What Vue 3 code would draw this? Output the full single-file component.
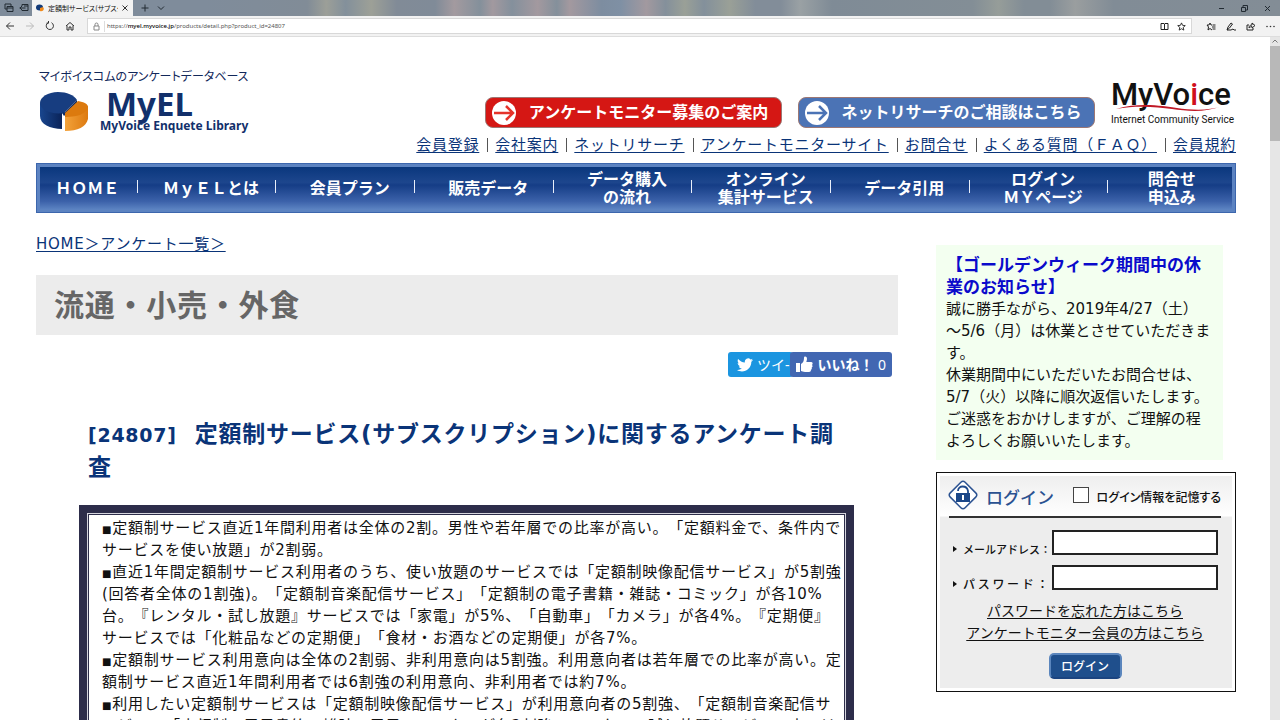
<script setup>
const utilityLinks = ['会員登録', '会社案内', 'ネットリサーチ', 'アンケートモニターサイト', 'お問合せ', 'よくある質問（ＦＡＱ）', '会員規約']

const navItems = [
  ['ＨＯＭＥ'],
  ['ＭｙＥＬとは'],
  ['会員プラン'],
  ['販売データ'],
  ['データ購入', 'の流れ'],
  ['オンライン', '集計サービス'],
  ['データ引用'],
  ['ログイン', 'ＭＹページ'],
  ['問合せ', '申込み'],
]

const summary = [
  ['定額制サービス直近1年間利用者は全体の2割。男性や若年層での比率が高い。「定額料金で、条件内で', 'サービスを使い放題」が2割弱。'],
  ['直近1年間定額制サービス利用者のうち、使い放題のサービスでは「定額制映像配信サービス」が5割強', '(回答者全体の1割強)。「定額制音楽配信サービス」「定額制の電子書籍・雑誌・コミック」が各10%', '台。『レンタル・試し放題』サービスでは「家電」が5%、「自動車」「カメラ」が各4%。『定期便』', 'サービスでは「化粧品などの定期便」「食材・お酒などの定期便」が各7%。'],
  ['定額制サービス利用意向は全体の2割弱、非利用意向は5割強。利用意向者は若年層での比率が高い。定', '額制サービス直近1年間利用者では6割強の利用意向、非利用者では約7%。'],
  ['利用したい定額制サービスは「定額制映像配信サービス」が利用意向者の5割強、「定額制音楽配信サ', 'ービス」「定額制の電子書籍・雑誌・電子コミック」が各2割強。レンタル・試し放題サービスの中では'],
]

const notice = ['誠に勝手ながら、2019年4/27（土）', '～5/6（月）は休業とさせていただきま', 'す。', '休業期間中にいただいたお問合せは、', '5/7（火）以降に順次返信いたします。', 'ご迷惑をおかけしますが、ご理解の程', 'よろしくお願いいたします。']
</script>

<template>
  <div class="window">
    <div class="titlebar">
      <div class="tab-tools">
        <svg width="10" height="10" viewBox="0 0 10 10" fill="none" stroke="#222b33"><path d="M1 1h6v2M1 1v5h2M3 3.5h6v5H3zM3 5h6" /></svg>
        <svg width="10" height="10" viewBox="0 0 10 10" fill="none" stroke="#222b33"><path d="M3 3V1.500h6v6H3V7M0.500 5h6M3 3L1 5l2 2M5 3h4" /></svg>
      </div>
      <div class="tab">
        <svg width="8" height="8" viewBox="0 0 8 8"><ellipse cx="3.500" cy="3.500" rx="3.500" ry="3" fill="#123a78" /><path d="M4 4l3-1c2 2 0 5-3 4z" fill="#f08a1c" /></svg>
        <span class="tab-title">定額制サービス(サブスクリ</span>
        <button class="plain" aria-label="タブを閉じる"><svg width="6" height="6" viewBox="0 0 6 6" stroke="#333" fill="none"><path d="M.5.5l5 5m0-5l-5 5" /></svg></button>
      </div>
      <button class="plain" aria-label="新しいタブ"><svg width="8" height="8" viewBox="0 0 8 8" stroke="#222b33" fill="none"><path d="M4 .5v7M.5 4h7" /></svg></button>
      <button class="plain" aria-label="タブ一覧"><svg width="8" height="8" viewBox="0 0 8 8" stroke="#222b33" fill="none"><path d="M1 2.500l3 3 3-3" /></svg></button>
      <div class="controls">
        <button class="plain" aria-label="最小化"><svg width="7" height="7" viewBox="0 0 7 7" stroke="#222b33"><path d="M1 3.500h5" /></svg></button>
        <button class="plain" aria-label="元に戻す"><svg width="7" height="7" viewBox="0 0 7 7" stroke="#222b33" fill="none"><path d="M.5 2.500h4v4h-4zM2 2V.5h4.500V5H5" /></svg></button>
        <button class="plain" aria-label="閉じる"><svg width="7" height="7" viewBox="0 0 7 7" stroke="#222b33"><path d="M1 1l5 5m0-5L1 6" /></svg></button>
      </div>
    </div>

    <div class="toolbar">
      <div class="tools left">
        <button class="plain" aria-label="戻る"><svg width="10" height="10" viewBox="0 0 10 10" stroke="#333" fill="none"><path d="M9 5H1.500M5 1.500L1.500 5 5 8.500" /></svg></button>
        <button class="plain" aria-label="進む"><svg width="10" height="10" viewBox="0 0 10 10" stroke="#bbb" fill="none"><path d="M1 5h7.500M5 1.500L8.500 5 5 8.500" /></svg></button>
        <button class="plain" aria-label="更新"><svg width="10" height="10" viewBox="0 0 10 10" stroke="#333" fill="none"><path d="M3 1.800A3.600 3.600 0 1 0 6.500 1.700M3.500 0v2.200H1.500" /></svg></button>
        <button class="plain" aria-label="ホーム"><svg width="10" height="10" viewBox="0 0 10 10" stroke="#333" fill="none"><path d="M1 5l4-3.500L9 5M2 4.500V9h2V6h2v3h2V4.500" /></svg></button>
      </div>
      <div class="address">
        <svg width="7" height="9" viewBox="0 0 7 9" stroke="#888" fill="none"><path d="M1 4h5v4H1zM2 4V2.500a1.500 1.500 0 0 1 3 0V4" /></svg>
        <span class="url">https://<b>myel.myvoice.jp</b>/products/detail.php?product_id=24807</span>
        <button class="plain" aria-label="読み取りビュー"><svg width="9" height="9" viewBox="0 0 9 9" stroke="#222" fill="none"><path d="M1 1.500h3l.5.5.5-.5h3v6H5l-.5.5-.5-.5H1zM4.500 2v6" /></svg></button>
        <button class="plain" aria-label="お気に入りに追加"><svg width="9" height="9" viewBox="0 0 10 10" stroke="#222" fill="none"><path d="M5 1l1.200 2.700 3 .3-2.300 2 .7 3L5 7.500 2.400 9l.7-3L.8 4l3-.3z" /></svg></button>
      </div>
      <div class="tools right">
        <button class="plain" aria-label="ハブ"><svg width="10" height="9" viewBox="0 0 10 9" stroke="#222" fill="none"><path d="M6.500 3H5L4 1 3 3H1l1.500 2L2 8l2-1.500L6 8M6 5h3.500M6.500 7h3M7 3h2.500" /></svg></button>
        <button class="plain" aria-label="ノート"><svg width="10" height="9" viewBox="0 0 10 9" stroke="#222" fill="none"><path d="M1 8l1-3 3-4 1.500 1-3 4L1 8h4l2-1 1 1h2" /></svg></button>
        <button class="plain" aria-label="共有"><svg width="10" height="9" viewBox="0 0 10 9" stroke="#222" fill="none"><path d="M3 3H1v5h6V6M3 6c0-2 1-3 3-3V1l3 2.500L6 6V4.500C5 4.500 4 5 3 6z" /></svg></button>
        <button class="plain" aria-label="設定"><svg width="9" height="3" viewBox="0 0 9 3" fill="#333"><circle cx="1" cy="1.500" r=".8" /><circle cx="4.500" cy="1.500" r=".8" /><circle cx="8" cy="1.500" r=".8" /></svg></button>
      </div>
    </div>

    <div class="viewport">
      <div class="page">
        <header class="head">
          <div class="brand">
            <p class="tagline">マイボイスコムのアンケートデータベース</p>
            <div class="brand-row">
              <svg class="pie" width="50" height="42" viewBox="0 0 50 42">
                <defs>
                  <linearGradient id="pieBlue" x1="0" x2="1" y2="0"><stop offset="0" stop-color="#19468e" /><stop offset="1" stop-color="#0a2358" /></linearGradient>
                  <linearGradient id="pieOrange" x1="0" x2="1" y2="0"><stop offset="0" stop-color="#f3a23a" /><stop offset="1" stop-color="#dd7a10" /></linearGradient>
                </defs>
                <path d="M0 12v13c0 8 10 13 22 13V22z" fill="url(#pieBlue)" />
                <path d="M24 22L37 9C34 4 27 1 18 1 8 1 0 6 0 12s10 12 24 10z" fill="#173d80" />
                <path d="M22 22l3-1 12-12v3L24 25z" fill="#0c2a63" />
                <path d="M25 25l23-10v13c-2 8-10 12-23 12z" fill="url(#pieOrange)" />
                <path d="M25 25V22L38 10c6 1 10 3 10 6-1 6-9 10-23 10z" fill="#dc7a0e" />
              </svg>
              <div class="brand-text">
                <span class="brand-name">MyEL</span>
                <span class="brand-sub">MyVoice Enquete Library</span>
              </div>
            </div>
          </div>
          <div class="head-right">
            <div class="banner-row">
              <a href="#" class="banner red">
                <svg width="24" height="24" viewBox="0 0 24 24"><circle cx="12" cy="12" r="12" fill="#fff" /><path d="M2 12h18M14 5l7 7-7 7" fill="none" stroke="#e5332a" stroke-width="2.500" /></svg>
                <span>アンケートモニター募集のご案内</span>
              </a>
              <a href="#" class="banner blue">
                <svg width="24" height="24" viewBox="0 0 24 24"><circle cx="12" cy="12" r="12" fill="#fff" /><path d="M2 12h18M14 5l7 7-7 7" fill="none" stroke="#4b73b5" stroke-width="2.500" /></svg>
                <span>ネットリサーチのご相談はこちら</span>
              </a>
              <div class="myvoice">
                <span class="mv-name">MyVo<i>i</i>ce</span>
                <svg class="swoosh" width="108" height="8" viewBox="0 0 108 8"><path d="M1 5C25-2 48 2 62 4s32 3 45-2C90 9 72 7 57 5S22 1 1 5z" fill="#c01825" /></svg>
                <span class="mv-sub">Internet Community Service</span>
              </div>
            </div>
            <nav class="utility">
              <a v-for="l in utilityLinks" :key="l" href="#">{{ l }}</a>
            </nav>
          </div>
        </header>

        <nav class="mainnav">
          <a v-for="item in navItems" :key="item[0]" href="#"><span v-for="t in item" :key="t">{{ t }}</span></a>
        </nav>

        <div class="columns">
          <main>
            <div class="crumbs"><a href="#">HOME＞アンケート一覧＞</a></div>
            <h1>流通・小売・外食</h1>
            <div class="share">
              <button class="tweet">
                <svg width="16" height="14" viewBox="0 0 24 20"><path fill="#fff" d="M24 2.400c-.9.400-1.800.7-2.800.8 1-.6 1.800-1.600 2.200-2.700-1 .6-2 1-3.100 1.200A4.900 4.900 0 0 0 11.900 6.200C7.800 6 4.200 4 1.700 1c-1.300 2.200-.7 5.100 1.500 6.600-.8 0-1.600-.2-2.200-.6 0 2.300 1.600 4.400 3.900 4.900-.7.200-1.500.2-2.200.1.600 2 2.400 3.400 4.600 3.400A9.900 9.900 0 0 1 0 17.500C9.100 23.300 21.500 17 21.500 5c1-.7 1.800-1.600 2.500-2.600z" /></svg>
                <span>ツイ-</span>
              </button>
              <button class="like">
                <svg width="17" height="17" viewBox="0 0 17 17" fill="#fff"><path d="M0 7h4v9H0zM5 8c2-1 3-3 3-6 0-2 3-2 3 1 0 1-.5 2-.7 3H15c2 0 2 2 1 3 1 1 .6 2-.3 2.500.4 1 0 2-.8 2.200.2 1-.2 2.300-2 2.300H9c-2 0-3-1-4-1z" /></svg>
                <b>いいね！</b><span>0</span>
              </button>
            </div>
            <h2><small>[24807]</small>定額制サービス(サブスクリプション)に関するアンケート調<br>査</h2>
            <div class="summary">
              <div class="summary-inner">
                <p v-for="p in summary" :key="p[0]"><span class="sq">■</span><template v-for="(l, i) in p" :key="i"><br v-if="i">{{ l }}</template></p>
              </div>
            </div>
          </main>

          <aside>
            <section class="notice">
              <h3><a href="#">【ゴールデンウィーク期間中の休<br>業のお知らせ】</a></h3>
              <p><template v-for="(l, i) in notice" :key="i"><br v-if="i">{{ l }}</template></p>
            </section>
            <form class="login" @submit.prevent>
              <div class="login-head">
                <svg width="32" height="32" viewBox="0 0 32 32"><rect x="5.500" y="5.500" width="21" height="21" rx="3" transform="rotate(45 16 16)" fill="#fff" stroke="#2b5291" stroke-width="1.500" /><path d="M11 12c0-6 9-6 10 0v3" fill="none" stroke="#1f4a8c" stroke-width="1.800" /><rect x="9" y="14" width="14" height="9" fill="#1b4788" /><path d="M16 16v5" stroke="#fff" stroke-width="2" /></svg>
                <span class="login-title">ログイン</span>
                <input id="remember" type="checkbox">
                <label for="remember">ログイン情報を記憶する</label>
              </div>
              <div class="field">
                <i class="tri"></i><label for="mail">メールアドレス：</label><input id="mail" type="text">
              </div>
              <div class="field">
                <i class="tri"></i><label for="pass">パ ス ワ ー ド ：</label><input id="pass" type="password">
              </div>
              <p class="help"><a href="#">パスワードを忘れた方はこちら</a><a href="#">アンケートモニター会員の方はこちら</a></p>
              <button class="submit">ログイン</button>
            </form>
          </aside>
        </div>
      </div>
      <div class="scrollbar"><svg width="10" height="9" viewBox="0 0 10 9" fill="none" stroke="#777"><path d="M2.500 5.500L5 3l2.500 2.500" /></svg><div class="thumb"></div></div>
    </div>
  </div>
</template>

<style>
body { margin: 0; overflow: hidden; }
</style>

<style scoped>
* { box-sizing: border-box; }
p, h1, h2, h3 { margin: 0; }
svg { display: block; flex: none; }
button, input { font: inherit; letter-spacing: inherit; }
.plain { border: 0; background: none; padding: 0; display: flex; align-items: center; }
.window {
  height: 100vh; display: flex; flex-direction: column; background: #fff; color: #111;
  font-family: "DejaVu Sans", "Noto Sans CJK JP", sans-serif; font-size: 15px; line-height: 22px;
  text-spacing-trim: space-all;
}
.titlebar {
  height: 16px; flex: none; display: flex; align-items: center; gap: 8px; padding-right: 9px;
  background: linear-gradient(90deg, #7f8c9b 0 16%, #818c97 24%, #9c9f98 25.500%, #83909b 27%, #9da097 29%, #818b97 31%, #808b98 34%, #a39a9f 35.500%, #84909b 37.500%, #a2999f 38.500%, #84909c 40%, #a3999f 42%, #84909b 43.500%, #a3999f 44.500%, #7d8da0 47%, #7f90a4 48.500%, #a2999f 50.500%, #84909b 52%, #9aa097 53.500%, #83909b 55%, #9aa097 57%, #828d99 59%, #828d99 61%, #9aa1a4 62.500%, #7f8b96 65%, #838e96 76%, #969d99 78%, #828d96 80%, #828d96 82%, #9a9e9f 84%, #818c96 87%, #838d96 100%);
}
.tab-tools { width: 32px; padding: 0 3px 0 4px; margin-right: -8px; display: flex; justify-content: space-between; }
.tab { width: 101px; height: 16px; background: #f3f3f3; display: flex; align-items: center; gap: 4px; padding: 0 5px 0 4px; }
.tab-title { flex: 1; overflow: hidden; white-space: nowrap; font-size: 7px; line-height: 14px; font-feature-settings: "palt"; font-family: "Noto Sans CJK JP", sans-serif; }
.controls { margin-left: auto; display: flex; gap: 16px; }
.toolbar { height: 21px; flex: none; display: flex; align-items: center; background: #f2f2f2; border-bottom: 1px solid #ddd; }
.tools { display: flex; align-items: center; }
.left { gap: 10px; padding: 0 12px 0 5px; }
.right { gap: 10px; padding: 0 5px 0 14px; }
.address { flex: 1; height: 16px; background: #fff; border: 1px solid #d8d8d8; display: flex; align-items: center; gap: 8px; padding: 0 5px; }
.url { flex: 1; font: 6px/11px "Noto Sans", sans-serif; color: #555; border-left: 1px solid #ddd; padding-left: 2px; margin-left: -4px; }
.url b { font-weight: 500; color: #000; }
.viewport { flex: 1; min-height: 0; display: flex; overflow: hidden; }
.page { flex: 1; min-width: 0; padding: 28px 34px 0 36px; letter-spacing: 0.05em; }
.scrollbar { width: 10px; flex: none; background: #e6e6e6; }
.thumb { height: 95px; background: #b8b8b8; }
a { color: #0a3478; text-underline-offset: 2px; }

.head { display: flex; justify-content: space-between; }
.tagline { font: 12px/22px "Noto Sans CJK JP", sans-serif; font-feature-settings: "palt"; letter-spacing: 0; color: #12285a; padding-left: 3px; }
.brand-row { display: flex; gap: 10px; padding: 4px 0 0 4px; letter-spacing: 0; }
.brand-text { display: flex; flex-direction: column; color: #12306b; font-family: "Noto Sans", sans-serif; font-weight: 700; }
.brand-name { font-size: 33px; line-height: 26px; padding-left: 6px; }
.brand-sub { font-size: 12px; line-height: 18px; font-weight: 700; }
.head-right { display: flex; flex-direction: column; align-items: flex-end; }
.banner-row { display: flex; align-items: flex-end; gap: 16px; padding-top: 12px; }
.banner { width: 297px; height: 31px; border-radius: 8px; border: 1px solid #9c7774; display: flex; align-items: center; padding: 0 6px; text-decoration: none; color: #fff; font-weight: 700; font-size: 16px; letter-spacing: 0; margin-bottom: -1px; }
.banner span { flex: 1; text-align: center; padding-left: 6px; }
.red { background: #d51714; }
.blue { background: #4b73b5; }
.myvoice { width: 125px; height: 50px; display: flex; flex-direction: column; position: relative; letter-spacing: 0; color: #111; }
.mv-name { font: 500 31px/36px Roboto, sans-serif; }
.mv-name i { font-style: normal; color: #d0101c; }
.swoosh { position: absolute; left: 4px; top: 27px; }
.mv-sub { font: 10px/14px Roboto, sans-serif; white-space: nowrap; }
.utility { display: flex; padding-top: 6px; }
.utility a { line-height: 24px; white-space: nowrap; }
.utility a + a { margin-left: 8px; }
.utility a + a::before { content: ""; display: inline-block; width: 1px; height: 14px; background: #555; margin-right: 7px; vertical-align: -2px; }

.mainnav { margin-top: 6px; height: 50px; display: grid; grid-template-columns: 101fr repeat(7, 139fr) 127fr; border: 1px solid #3c66ad; box-shadow: inset 0 0 0 3px #5c83c1; background: linear-gradient(#06347a, #1d468d 38%, #153d86 44%, #3c62aa 78%, #5e86c4 96%); }
.mainnav a { display: flex; flex-direction: column; align-items: center; justify-content: center; color: #fff; text-decoration: none; font-weight: 700; font-size: 16px; line-height: 18px; letter-spacing: 0; position: relative; padding-top: 2px; }
.mainnav a:not(:first-child):not(:last-child) { padding-left: 8px; }
.mainnav a:not(:last-child)::after { content: ""; position: absolute; right: 0; top: 16px; width: 1px; height: 13px; background: #e8eefa; }

.columns { display: grid; grid-template-columns: minmax(0, 862fr) 300px; column-gap: 38px; }
.crumbs { padding-top: 20px; }
h1 { margin-top: 20px; height: 60px; background: #ececec; color: #666; font-size: 30px; line-height: 62px; padding-left: 18px; }
.share { display: flex; justify-content: flex-end; padding: 17px 6px 0 0; }
.share button { height: 25px; border: 0; border-radius: 3px; color: #fff; display: flex; align-items: center; font-size: 14px; letter-spacing: 0; padding: 0; font-family: "Noto Sans", "Noto Sans CJK JP", sans-serif; }
.share .tweet { width: 65px; background: #1b95e0; padding-left: 9px; gap: 4px; white-space: nowrap; margin-right: -3px; overflow: hidden; }
.share .like { width: 102px; background: #4267b2; padding: 0 6px; justify-content: space-between; z-index: 1; }
h2 { margin-top: 41px; padding-left: 52px; font-size: 23px; line-height: 32px; color: #0a3478; white-space: nowrap; }
h2 small { font-size: 19px; margin-right: 18px; }
.summary { margin: 22px 44px 0 43px; border: 8px solid #2d2d4a; padding: 1px; background: #d6d6de; }
.summary-inner { border: 1px solid #2d2d4a; background: #fff; padding: 2px 0 20px 13px; white-space: nowrap; }
.sq { font-size: 10px; line-height: 10px; }

aside { padding-top: 32px; }
.notice { width: 287px; background: #f3fff0; padding: 9px 10px; height: 215px; white-space: nowrap; letter-spacing: 0; }
h3 { font-size: 17px; line-height: 22px; }
h3 a { color: #0a0acb; text-decoration: none; }
.login { margin-top: 12px; height: 220px; border: 1px solid #111; outline: 3px solid #fff; outline-offset: -4px; background: linear-gradient(#ededed, #fff 43px, #ededed 44px); padding: 4px 14px 0 12px; letter-spacing: 0; }
.login-head { height: 41px; border-bottom: 2px solid #333; display: flex; align-items: center; white-space: nowrap; margin: 0; }
.login-head svg { margin: 0 7px 4px -2px; }
.login-title { flex: 1; font-size: 17px; color: #2b5291; font-weight: 500; font-family: "Noto Sans CJK JP", sans-serif; }
#remember { appearance: none; width: 16px; height: 16px; border: 1px solid #444; background: #fff; margin: 0 8px 4px 0; }
.login-head label { font-size: 12px; font-weight: 500; font-family: "Noto Sans CJK JP", sans-serif; font-feature-settings: "palt"; }
.field { display: flex; align-items: center; margin-top: 12px; padding: 0 3px 0 4px; }
.field + .field { margin-top: 10px; }
.tri { border: 3px solid transparent; border-left: 4px solid #111; border-right: 0; margin: 12px 6px 0 0; }
.field label { flex: 1; min-width: 0; font-size: 11px; font-weight: 500; padding-top: 13px; font-family: "Noto Sans CJK JP", sans-serif; white-space: nowrap; line-height: 12px; }
.field + .field label { font-size: 12px; }
.field input { width: 166px; height: 25px; flex: none; border: 2px solid #222; background: #fff; padding: 0 4px; }
.help { display: flex; flex-direction: column; align-items: center; padding-top: 10px; font-size: 14px; }
.help a { color: #111; }
.submit { display: block; margin: 9px auto 0; width: 73px; height: 26px; border: 2px solid #5b86bd; border-bottom-color: #1b4480; border-radius: 5px; background: #1f4f8c; color: #fff; font-size: 12px; font-weight: 500; padding: 0; line-height: 20px; font-family: "Noto Sans CJK JP", sans-serif; }
</style>
